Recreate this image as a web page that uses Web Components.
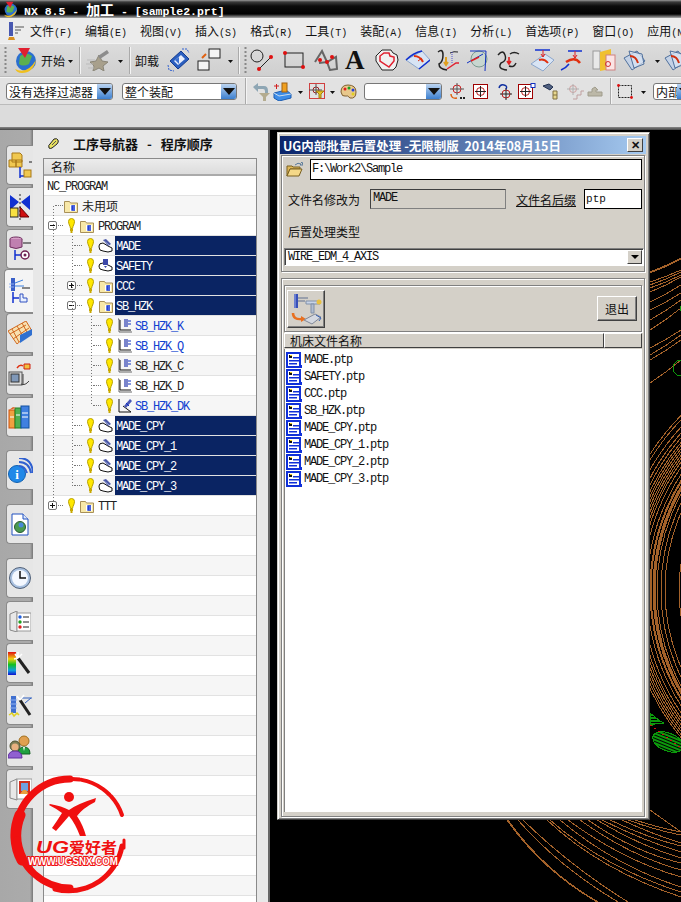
<!DOCTYPE html>
<html lang="zh">
<head>
<meta charset="utf-8">
<title>NX 8.5</title>
<style>
  html, body { margin: 0; padding: 0; background: #000; }
  body { width: 681px; height: 902px; overflow: hidden; }
</style>
</head>
<body>
<nx-app></nx-app>
<script>
/* ── Iconos: [ancho, alto, contenido] ─────────────────────── */
const K = '#1a1a1a';
const MONO = `12px "Liberation Mono",monospace`;
const ICONS = {
  nx: [25,27,`<circle cx="13" cy="14" r="10" fill="#2a6fd0"/><path d="M7 9q6-5 12 0l-3 8q-6 3-10 0z" fill="#5cb050"/><path d="M2 22q12 6 21-9-3 13-14 13-5 0-7-4z" fill="#f0c020"/><path d="M5 1h12l-5 10z" fill="#e02030"/>`],
  star: [26,22,`<path d="M14 6l3 6 6 1-5 4 1 5-5-3-6 3 1-5-4-4 6-1z" fill="#a8a08c" stroke="#8a8678"/><path d="M2 11h8M1 15h7M3 19h6" stroke="#bbb"/><path d="M13 7l9-6 2 3-9 6z" fill="#8c8c8c"/>`],
  unload: [24,24,`<path d="M3 13L14 3l8 8-11 10z" fill="#2b5fc0" stroke="#123a90"/><path d="M7 13l7-6 4 4-7 6z" fill="#e8eefc"/><path d="M8 12l4 4V9z" fill="#3b70d0"/><path d="M15 1l5 0 2 4M1 17l1 5 5 1" fill="none" stroke="#3060d0" stroke-dasharray="2 1"/>`],
  squares: [26,24,`<rect x="12" y="1" width="11" height="9" fill="#f4f4f4" stroke="#222"/><rect x="1" y="13" width="11" height="9" fill="#f4f4f4" stroke="#222"/><path d="M5 10l4-4" stroke="#e06010" stroke-width="2"/>`],
  cline: [25,22,`<circle cx="7" cy="7" r="6" fill="none" stroke="#222"/><path d="M10 19L21 8" stroke="#222"/><circle cx="9" cy="20" r="2" fill="#e01010"/><circle cx="21" cy="8" r="2" fill="#e01010"/>`],
  rect: [24,20,`<rect x="3" y="3" width="18" height="14" fill="none" stroke="#222"/><circle cx="3" cy="3" r="2" fill="#e01010"/><circle cx="21" cy="17" r="2" fill="#e01010"/>`],
  poly: [25,22,`<path d="M2 13L9 2l5 11 9-5 1 12-7 1-3-8-8 1" fill="none" stroke="#666" stroke-width="2"/><circle cx="7" cy="11" r="2" fill="#e01010"/><circle cx="14" cy="13" r="2" fill="#e01010"/><circle cx="19" cy="8" r="2" fill="#e01010"/>`],
  heart: [24,22,`<path d="M1 7l6-6h9l2 3 4 2 1 5-2 7-3 3H7L1 12z" fill="#f0f0f0" stroke="#222"/><path d="M5 7l4-3h5l1 3 4 1 0 4-5 6-9-6z" fill="none" stroke="#e02030" stroke-width="1.5"/>`],
  surf1: [25,20,`<path d="M1 10L17 1l8 9-11 9z" fill="#d8e4f4" stroke="#8ca6cc"/><path d="M1 10Q8 3 17 1" fill="none" stroke="#1030d0" stroke-width="1.5"/><path d="M14 19l11-9" stroke="#1030d0" stroke-width="1.5"/><path d="M9 6q6 0 9 6" fill="none" stroke="#e03010" stroke-width="2"/><path d="M13 11l4-3" stroke="#e03010"/>`],
  blend: [24,24,`<path d="M2 4q5-4 5 3t-4 9q0 5 8 6" fill="none" stroke="#222" stroke-width="1.5"/><path d="M14 5q4-2 8-1" fill="none" stroke="#222"/><path d="M16 4v12" stroke="#5050d0" stroke-dasharray="1 1"/><path d="M10 9v8m-2-3l2 3 2-3" stroke="#e0a020" stroke-width="2" fill="none"/><path d="M11 21l9-6 3 0" stroke="#e02030" stroke-width="1.5" fill="none"/>`],
  sphere: [24,24,`<circle cx="12" cy="11" r="8" fill="#c8d6d0" stroke="#7a9a90"/><path d="M3 3h16l-1 20M0 15L16 6" fill="none" stroke="#1030c0"/><path d="M4 13l8-4" stroke="#e02020" stroke-width="1.5"/>`],
  blend2: [23,22,`<path d="M1 6q5-6 7 0t-4 8q-4 6 6 7M12 17q5 2 7-3M13 5q4-3 9 0" fill="none" stroke="#222" stroke-width="1.4"/><path d="M12 8v7m-2-3l2 3 2-3" stroke="#e02020" stroke-width="1.6" fill="none"/>`],
  surf2: [25,24,`<path d="M1 16l14-10 9 6-11 11z" fill="#d8e4f4" stroke="#8ca6cc"/><path d="M5 2h15" stroke="#1030d0" stroke-width="1.5"/><path d="M13 2v7m-2-3l2 3 2-3" stroke="#e02020" fill="none"/><path d="M9 12q5-2 9 3" fill="none" stroke="#e03010" stroke-width="2"/>`],
  surf3: [25,24,`<path d="M8 3h14M1 22q5-2 8-6" fill="none" stroke="#1030d0" stroke-width="1.5"/><path d="M15 3v7m-2-3l2 3 2-3" stroke="#e02020" fill="none"/><path d="M6 14q9-6 14 1" fill="none" stroke="#e03010" stroke-width="2.5"/>`],
  doors: [24,24,`<rect x="1" y="3" width="7" height="18" fill="#e8e8e8" stroke="#999"/><path d="M8 4l11-3v20l-11 2z" fill="#f0c030"/><rect x="14" y="7" width="9" height="15" fill="#fbe4e4" stroke="#d08080"/><circle cx="16" cy="16" r="2.5" fill="none" stroke="#d03030"/>`],
  plane: [23,22,`<path d="M1 9l13-7 8 10-13 9z" fill="#c4d2e6" stroke="#50709c"/><path d="M6 2l13 3 2 10-10 4z" fill="#dce6f4" stroke="#50709c" fill-opacity=".7"/><path d="M7 7q6 0 8 7" fill="none" stroke="#d03010" stroke-width="2"/>`],
  flt1: [20,19,`<path d="M2 5l5-4v3h6q4 0 4 5v3h-3V9q0-2-2-2H7v3z" fill="#8ea6b4"/><path d="M8 11h11l-4 4v4h-3v-4z" fill="#b4ac90"/>`],
  cube: [19,19,`<path d="M1 11l12-3 5 4v4L6 19l-5-3z" fill="#3c8ce8" stroke="#1c5cb0"/><path d="M1 11l5 3 12-2" fill="none" stroke="#cde"/><rect x="9" y="1" width="5" height="9" fill="#f0a020" stroke="#a06010"/><path d="M1 4h5M3.500 2v5" stroke="#d02020"/>`],
  fltsq: [16,16,`<rect x=".5" y=".5" width="15" height="15" fill="none" stroke="#d04040"/><circle cx="7" cy="7" r="3" fill="none" stroke="#a02020"/><path d="M0 7h13M7 1v11" stroke="#555"/><path d="M7 8h8l-3 3v4h-2v-4z" fill="#e8c020" stroke="#a08010"/>`],
  palette: [17,15,`<path d="M8 1q8 0 8 7t-6 6q-2-3-5-2T1 8q0-7 7-7z" fill="#e8c88c" stroke="#806030"/><circle cx="5" cy="5" r="1.500" fill="#e02020"/><circle cx="9" cy="4" r="1.500" fill="#20a020"/><circle cx="13" cy="6" r="1.500" fill="#2040e0"/><circle cx="13" cy="10" r="1.500" fill="#e0d020"/>`],
  sn1: [18,18,`<circle cx="8" cy="7" r="4" fill="none" stroke="#d02020"/><path d="M1 7h14M8 1v12" stroke="#555"/><path d="M2 12q0 5 6 4" fill="none" stroke="#e06010" stroke-width="1.5"/><path d="M11 16h6" stroke="#222" stroke-width="2" stroke-dasharray="2 1"/>`],
  sn2: [15,15,`<rect x=".5" y=".5" width="14" height="14" fill="#fff" stroke="#a00000"/><circle cx="7.500" cy="7.500" r="4" fill="none" stroke="#c02020"/><path d="M2 7.500h11M7.500 2v11" stroke="#222"/>`],
  sn3: [16,17,`<circle cx="9" cy="11" r="4" fill="none" stroke="#c02020"/><path d="M3 11h12M9 5v12" stroke="#222"/><path d="M2 5q1-4 5-3t2 4" fill="none" stroke="#1030a0" stroke-width="1.4"/>`],
  sn4: [18,16,`<rect x=".5" y="1.500" width="14" height="14" fill="#fff" stroke="#a00000"/><circle cx="7.500" cy="8.500" r="4" fill="none" stroke="#c02020"/><path d="M2 8.500h11M7.500 3v11" stroke="#222"/><rect x="13" y=".5" width="4" height="4" fill="#fff" stroke="#1030c0"/>`],
  sn5: [16,17,`<path d="M1 3l6-2 4 3-3 3z" fill="#506080" stroke="#203050"/><path d="M11 8v8h4V8z" fill="#e8d890" stroke="#807040"/><path d="M11 12h4" stroke="#807040"/>`],
  sn6: [18,17,`<circle cx="6" cy="6" r="3.500" fill="none" stroke="#d0a0a0"/><path d="M0 6h12M6 1v11" stroke="#b0b0b0"/><path d="M6 16h4v-4h4V8h3" fill="none" stroke="#c0a0a0"/>`],
  sn7: [16,11,`<path d="M5 3l3-2 3 3h-2v2h6v4H1V6h4z" fill="#bcb8a8" stroke="#a09c8c"/>`],
  dashsq: [16,15,`<rect x="1.500" y="1.500" width="13" height="12" fill="none" stroke="#222" stroke-dasharray="2 1"/><circle cx="1.500" cy="1.500" r="1.400" fill="#e01010"/><circle cx="14.500" cy="13.500" r="1.400" fill="#e01010"/>`],
  gear: [11,11,`<path d="M1 10q-1-3 1-4l4-5q3-1 4 1t-1 4l-5 4q-2 1-3 0z" fill="#e8e060" stroke="#222"/><path d="M4 7l4-4" stroke="#555"/>`],
  bulb: [7,16,`<path d="M3.500.5q3 0 3 3 0 2-1.500 5l-.5 2h-2l-.5-2Q.5 5.500.5 3.500q0-3 3-3z" fill="#ffe800" stroke="#b8a000"/><rect x="2" y="11" width="3" height="2" fill="#c8a800"/><rect x="2.500" y="13" width="2" height="2" fill="#c8a800"/>`],
  folder: [14,14,`<path d="M.5 2.500h5l1 1.500h7v9.500H.5z" fill="#f8e8a8" stroke="#a89058"/><path d="M6 6h6v6H6z" fill="#fff"/><path d="M11 7H8v2h3M8 9v2h3" fill="none" stroke="#1030d0" stroke-width="1.300"/>`],
  op: [15,14,`<path d="M1 7q0-3 4-3l5 3 4 2v3l-4 1-5-1-3-1q-1-2-1-4z" fill="#fff" stroke="#111"/><path d="M5 1l3-1 5 5-3 2z" fill="#4a58a8"/><path d="M6 2l5 4" stroke="#a8b0d8"/>`],
  opv: [15,15,`<path d="M1 8q0-3 4-3l5 2 4 2v3l-4 1-5-1-3-1q-1-2-1-3z" fill="#fff" stroke="#111"/><rect x="5" y="1" width="5" height="6" fill="#3c48a8"/><path d="M6 8h3l-1.500 2z" fill="#3c48a8"/>`],
  mill: [15,15,`<path d="M1 1h1v13h13" fill="none" stroke="#666" stroke-width="1"/><path d="M3 2v10h11" fill="none" stroke="#111"/><rect x="7" y="1" width="4" height="8" fill="#4a58b8"/><path d="M8 1v8M10 1v8" stroke="#a8b0e0"/><path d="M11 3h3M11 6h3" stroke="#1030c0"/>`],
  drill: [15,15,`<path d="M2 1v13h12L6 8" fill="none" stroke="#111"/><path d="M7 8l6-7 2 2-6 7z" fill="#4a58b8"/><path d="M9 5l3 3" stroke="#1030c0"/>`],
  open: [17,15,`<path d="M1 4h5l1 1h7v2H4L1 14z" fill="#e0b858" stroke="#7a6020"/><path d="M4 7h12l-3 7H1z" fill="#f4d888" stroke="#7a6020"/><path d="M9 3q3-3 6-1l-1 1 3 0-1-3-1 1" fill="none" stroke="#5a7a9a"/>`],
  batch: [32,32,`<rect x="4" y="1" width="4" height="14" fill="#3850b8"/><path d="M5 1v14" stroke="#a0b0e8"/><path d="M8 5h10M8 8h7" stroke="#607090"/><path d="M3 20q0 7 9 6" fill="none" stroke="#e87020" stroke-width="2.500"/><path d="M11 23l5 3-5 3z" fill="#e87020"/><path d="M16 8h14v3H16z" fill="#c8d4e8" stroke="#8090a8"/><path d="M21 11v9h3v-9z" fill="#b0bcd0" stroke="#8090a8"/><circle cx="29" cy="9" r="2.500" fill="#e8c040"/><path d="M14 27l11-6 6 3-9 7z" fill="#d4d8e0" stroke="#808898"/><path d="M26 22l5 3-2 3" fill="none" stroke="#3860b0"/>`],
  file: [17,16,`<rect width="15" height="16" fill="#1030d8"/><rect x="2" y="2" width="11" height="12" fill="#fff"/><rect x="3" y="3" width="3" height="3" fill="#111"/><rect x="4" y="3" width="2" height="1" fill="#f0d020"/><rect x="7" y="5" width="7" height="1.500" fill="#1030d8"/><rect x="3" y="8" width="11" height="1.500" fill="#1030d8"/><rect x="3" y="11" width="8" height="1.500" fill="#1030d8"/><rect x="15" y="13" width="1" height="3" fill="#1030d8"/>`],
  /* iconos del carril izquierdo */
  r1: [24,26,`<path d="M4 1h8l2 2v7H4zM1 8h7v7H1zM8 8h6v7H8z" fill="#f0c850" stroke="#a87818"/><path d="M21 10h6" stroke="${K}"/><path d="M12 15v11M12 24h7" stroke="#1030d0" stroke-width="1.500"/><rect x="16" y="18" width="7" height="7" fill="#f0c850" stroke="#a87818"/>`],
  r2: [20,26,`<path d="M0 1l9 7-9 8zM20 1l-9 7 9 8z" fill="#1030d0"/><path d="M10 0v26" stroke="#222" stroke-dasharray="2 2"/><rect x="0" y="14" width="8" height="9" fill="#f8e040" stroke="#222"/><path d="M10 13l9 10H10z" fill="#d01010" stroke="#600"/>`],
  r3: [22,26,`<ellipse cx="7" cy="3" rx="6" ry="2" fill="#d8a0c8" stroke="#703060"/><path d="M1 3v8q6 3 12 0V3" fill="#c080b0" stroke="#703060"/><path d="M14 7h8" stroke="${K}"/><path d="M6 14v10M6 19h6" stroke="#1030d0" stroke-width="1.500"/><circle cx="16" cy="19" r="4" fill="#fff" stroke="#702050" stroke-width="1.500"/><circle cx="16" cy="19" r="1.500" fill="#702050"/>`],
  r4: [23,26,`<rect x="3" y="0" width="4" height="13" fill="#3a60c8"/><path d="M1 6h5M1 9h5" stroke="#8fb0f0"/><path d="M7 5l8-3M7 8h9" stroke="#3a80e0"/><path d="M14 10h8" stroke="${K}"/><path d="M5 14v11M5 20h6" stroke="#1030d0" stroke-width="1.500"/><path d="M12 16h3v4h4v4h-7z" fill="#e8f0ff" stroke="#3050c0"/>`],
  r5: [24,24,`<path d="M0 10L18 0l6 10-15 13z" fill="#f8e0b0" stroke="#d06820"/><path d="M4 8l7 13M9 5l7 12M14 2l6 11M2 13L18 4M5 18l16-11" stroke="#d06820"/><path d="M12 14l12-6v6l-12 8z" fill="#3070d0"/>`],
  r6: [24,24,`<rect x="1" y="9" width="13" height="13" fill="#dcdcdc" stroke="#555"/><rect x="3" y="11" width="8" height="8" fill="#8098b8" stroke="#333"/><path d="M9 5q3-4 6-2" fill="none" stroke="#e03010" stroke-width="1.500"/><path d="M16 1h6v5h-6z" fill="#f0c040" stroke="#d02010"/><path d="M15 11v11M13 21q4 2 8-3" stroke="#444" fill="none"/>`],
  r7: [24,24,`<rect x="1" y="5" width="6" height="18" fill="#f0a040" stroke="#d05010"/><rect x="7" y="3" width="6" height="20" fill="#50b050" stroke="#208020"/><rect x="13" y="1" width="8" height="22" fill="#4080e0" stroke="#1050a0"/><path d="M2 12h4M8 10h4M14 8h6M14 12h6" stroke="#fff"/><path d="M1 5l4-3 3 1" fill="#e06020"/>`],
  r8: [25,25,`<circle cx="9" cy="16" r="8.500" fill="#2088e8" stroke="#1060b0"/><text x="9" y="21" font-size="13" font-weight="700" font-family="Liberation Serif" text-anchor="middle" fill="#fff">i</text><path d="M11 4q10 0 12 11M11 0q13 0 14 15M11 8q6 0 8 7" fill="none" stroke="#3060d0" stroke-width="2"/>`],
  r9: [18,23,`<path d="M1 1h11l5 5v16H1z" fill="#fff" stroke="#2050c0"/><path d="M12 1v5h5" fill="#dfe8f8" stroke="#2050c0"/><circle cx="9" cy="14" r="5.500" fill="#4a9a50" stroke="#285a30"/><circle cx="10" cy="12" r="2.500" fill="#4888d8"/>`],
  r10: [22,22,`<circle cx="11" cy="11" r="10.500" fill="#a8c0e0" stroke="#506078"/><circle cx="11" cy="11" r="8" fill="#f4f8ff"/><path d="M11 4v7h6" fill="none" stroke="#111" stroke-width="1.500"/>`],
  r11: [22,21,`<path d="M1 3l7-3v21l-7-2z" fill="#e8e8e8" stroke="#888"/><rect x="8" y="2" width="14" height="18" fill="#fff" stroke="#999"/><circle cx="11" cy="6" r="1.700" fill="#2060e0"/><circle cx="11" cy="11" r="1.700" fill="#20a020"/><circle cx="11" cy="16" r="1.700" fill="#e02020"/><path d="M14 6h6M14 11h6M14 16h6" stroke="#222"/>`],
  r12: [24,25,`<defs><linearGradient id="rb" x1="0" y1="0" x2="0" y2="1"><stop offset="0" stop-color="#e01010"/><stop offset=".3" stop-color="#f0d010"/><stop offset=".55" stop-color="#10c020"/><stop offset=".8" stop-color="#10a0e0"/><stop offset="1" stop-color="#1010d0"/></linearGradient></defs><rect x="0" y="1" width="8" height="23" fill="url(#rb)"/><path d="M10 7l11 15" stroke="#222" stroke-width="3"/><path d="M10 7l-3-4m3 4l4-4m-4 4l-4 1m4-1v-6" stroke="#fff" stroke-width="1.500"/>`],
  r13: [24,25,`<rect x="3" y="3" width="5" height="17" fill="#4070d0"/><path d="M2 7h7M2 11h7M2 15h7" stroke="#90b0f0"/><path d="M1 22l3-2 2 3 3-3 2 2" stroke="#e0d020" stroke-width="1.500" fill="none"/><path d="M13 5h11M23 5l-6 5" stroke="#3060c0" fill="none"/><path d="M12 7l10 15" stroke="#222" stroke-width="3"/><path d="M12 7l-3-4m3 4l4-5" stroke="#fff" stroke-width="1.500"/>`],
  r14: [24,24,`<circle cx="16" cy="6" r="5" fill="#e0a050" stroke="#a07020"/><path d="M10 19q0-7 6-7t6 7z" fill="#20a040" stroke="#106020"/><path d="M15 12l1 4 1-4" fill="#fff"/><circle cx="7" cy="11" r="5" fill="#808058" stroke="#505030"/><circle cx="7" cy="12" r="3.500" fill="#e8b080"/><path d="M0 23q0-7 7-7t7 7z" fill="#9060d0" stroke="#6030a0"/>`],
  r15: [23,23,`<path d="M1 4l7-3v21l-7-2z" fill="#e8e8e8" stroke="#888"/><rect x="8" y="1" width="15" height="20" fill="#fff" stroke="#999"/><rect x="10" y="3" width="11" height="13" fill="#d03020"/><path d="M12 5h7v8h-7z" fill="#70a0e0"/><path d="M11 16l3-4h3l3 4z" fill="#e8a040"/>`],
  grip: [3,26,`<path d="M1.500 0v26" stroke="#888" stroke-width="2" stroke-dasharray="2 2"/>`],
  caret: [5,3,`<path d="M0 0h5L2.500 3z" fill="#111"/>`],
};

/* ── <nx-icon name="..."> ─────────────────────────────────── */
class NxIcon extends HTMLElement {
  connectedCallback() {
    const [w, h, body] = ICONS[this.getAttribute('name')];
    const root = this.attachShadow({ mode: 'open' });
    root.innerHTML = `<style>:host{display:block;flex:none;line-height:0}</style>
      <svg xmlns="http://www.w3.org/2000/svg" width="${w}" height="${h}" viewBox="0 0 ${w} ${h}">${body}</svg>`;
  }
}
customElements.define('nx-icon', NxIcon);

/* ── Barra de título ──────────────────────────────────────── */
class NxTitlebar extends HTMLElement {
  connectedCallback() {
    this.attachShadow({ mode: 'open' }).innerHTML = `
      <style>
        :host { display:flex; align-items:center; height:18px; padding-left:3px; box-sizing:border-box;
          background:linear-gradient(#9a9a9a 0,#3a3a3a 2px,#0c0c0c 6px,#000 14px,#555 16px,#aaa 18px);
          color:#fff; font:bold 11.5px "Liberation Mono","Noto Sans CJK SC",monospace; }
        span { margin-left:5px; white-space:pre; }
        b { font:bold 14px "Noto Sans CJK SC",sans-serif; }
      </style>
      <nx-icon name="nx" style="transform:scale(.62);margin:-5px -4px -5px -5px"></nx-icon>
      <span>NX 8.5 - <b>加工</b> - [sample2.prt]</span>`;
  }
}
customElements.define('nx-titlebar', NxTitlebar);

/* ── Menú ─────────────────────────────────────────────────── */
class NxMenubar extends HTMLElement {
  connectedCallback() {
    const items = [['文件','F'],['编辑','E'],['视图','V'],['插入','S'],['格式','R'],['工具','T'],
      ['装配','A'],['信息','I'],['分析','L'],['首选项','P'],['窗口','O'],['应用','N']];
    this.attachShadow({ mode: 'open' }).innerHTML = `
      <style>
        :host { display:flex; align-items:center; height:25px; box-sizing:border-box; padding-left:4px; gap:13px;
          overflow:hidden; background:#ececec; color:#111; font:12px "Noto Sans CJK SC",sans-serif; white-space:nowrap; }
        i { font:10px "Liberation Mono",monospace; }
        .m { flex:none; }
      </style>
      <svg width="16" height="18" viewBox="0 0 16 18" style="margin-left:4px;margin-right:-7px;flex:none">
        <path d="M2 0v14M4 0v14" stroke="#4858b0" stroke-width="2"/><path d="M1 15h5l1 3H0z" fill="#d89020"/>
        <path d="M7 5h9M7 8h6M7 11h3" stroke="#555"/></svg>
      ${items.map(([a, b]) => `<span class="m">${a}<i>(${b})</i></span>`).join('')}`;
  }
}
customElements.define('nx-menubar', NxMenubar);

/* ── Combo de la barra ────────────────────────────────────── */
class NxCombo extends HTMLElement {
  connectedCallback() {
    this.attachShadow({ mode: 'open' }).innerHTML = `
      <style>
        :host { display:flex; flex:none; height:17px; box-sizing:border-box; border:1px solid #777; border-radius:3px;
          background:#fff; overflow:hidden; font:12px/15px "Noto Sans CJK SC",sans-serif; color:#111; }
        span { flex:1; padding-left:2px; white-space:nowrap; overflow:hidden; }
        b { width:15px; flex:none; background:linear-gradient(#bcd4f0,#3c80d0); display:flex; align-items:center; justify-content:center; }
        b::after { content:""; border:6px solid transparent; border-top:7px solid #111; border-bottom:0; }
      </style><span><slot></slot></span><b></b>`;
  }
}
customElements.define('nx-combo', NxCombo);

/* ── Barra de herramientas: los hijos se separan con margen ─ */
class NxToolbar extends HTMLElement {
  connectedCallback() {
    const h = this.getAttribute('h');
    const bg = this.getAttribute('bg');
    this.attachShadow({ mode: 'open' }).innerHTML = `
      <style>
        :host { display:flex; align-items:center; height:${h}px; box-sizing:border-box; overflow:hidden;
          background:${bg}; border-top:1px solid #f4f4f4; border-bottom:1px solid #bbb; }
      </style><slot></slot>`;
  }
}
customElements.define('nx-toolbar', NxToolbar);

class NxSep extends HTMLElement {
  connectedCallback() {
    this.attachShadow({ mode: 'open' }).innerHTML = `
      <style>:host{display:block;flex:none;width:1px;height:27px;background:#aaa;border-right:1px solid #f4f4f4}</style>`;
  }
}
customElements.define('nx-sep', NxSep);

class NxLabel extends HTMLElement {
  connectedCallback() {
    this.attachShadow({ mode: 'open' }).innerHTML = `
      <style>:host{display:block;flex:none;font:12px "Noto Sans CJK SC",sans-serif;color:#111;white-space:nowrap}</style><slot></slot>`;
  }
}
customElements.define('nx-label', NxLabel);

/* ── Carril izquierdo ─────────────────────────────────────── */
class NavRail extends HTMLElement {
  connectedCallback() {
    const tabs = [[15,'r1'],[2,'r2'],[2,'r3'],[0,'r4',1],[0,'r5'],[2,'r6'],[2,'r7'],[13,'r8'],[14,'r9'],
      [14,'r10'],[3,'r11'],[2,'r12'],[2,'r13'],[2,'r14'],[2,'r15']];
    this.attachShadow({ mode: 'open' }).innerHTML = `
      <style>
        :host { display:flex; flex-direction:column; align-items:flex-end; width:33px; box-sizing:border-box;
          background:linear-gradient(90deg,#a8a8a8 0,#ababab 30px,#777 33px); overflow:hidden; }
        .t { width:27px; height:40px; box-sizing:border-box; flex:none; display:flex; align-items:center; justify-content:center;
          border:1px solid #8a8a8a; border-right:0; border-radius:4px 0 0 4px; background:#e6e6e6; overflow:hidden; }
        .on { width:29px; height:44px; background:#f4f4f4; }
      </style>
      ${tabs.map(([m, n, on]) => `<div class="t${on ? ' on' : ''}" style="margin-top:${m}px"><nx-icon name="${n}"></nx-icon></div>`).join('')}`;
  }
}
customElements.define('nav-rail', NavRail);

/* ── Fila del árbol ───────────────────────────────────────── */
class TreeRow extends HTMLElement {
  connectedCallback() {
    const level = +(this.getAttribute('level') || 0);
    const exp = this.getAttribute('exp');
    const icon = this.getAttribute('icon');
    const sel = this.hasAttribute('sel');
    const blue = this.hasAttribute('blue');
    const base = 4 + 19 * (level - 1);   // 44 es el borde izquierdo del árbol
    const cjk = this.hasAttribute('cjk');
    const label = this.getAttribute('label') || '';
    const nobulb = this.hasAttribute('nobulb');
    const iconGap = nobulb ? 1 : (icon === 'folder' ? 5 : 4);
    let inner = '';
    if (level === 0 && label) {
      inner = `<span class="l" style="padding-left:3px">${label}</span>`;
    } else if (level > 0) {
      const box = exp ? `<i class="x">${exp === '+' ? '<u></u>' : ''}</i>` : '';
      const start = exp ? base : base + 7;
      const dots = exp ? 5 : 8;
      inner = `<div style="width:${start}px;flex:none"></div>${box}
        <i class="d" style="width:${dots}px;margin-left:${exp ? 1 : 0}px"></i>
        ${nobulb ? '' : `<nx-icon name="bulb" style="margin-left:5px"></nx-icon>`}
        <nx-icon name="${icon}" style="margin-left:${iconGap}px"></nx-icon>
        <span class="l${sel ? ' s' : ''}${blue ? ' b' : ''}${cjk ? ' c' : ''}${level === 3 ? ' n' : ''}">${label}</span>`;
    }
    this.attachShadow({ mode: 'open' }).innerHTML = `
      <style>
        :host { display:flex; align-items:center; height:20px; box-sizing:border-box; border-bottom:1px solid #e2e2e2; background:#fff; }
        :host(:nth-child(even)) { background:#f6f6f6; }
        .l { font:${MONO}; line-height:22px; letter-spacing:-1.2px; color:#222; height:19px; padding:0 4px; white-space:nowrap; overflow:hidden; }
        .s { flex:1; background:#0a2463; color:#fff; margin-left:2px; padding-left:1px; }
        .n { padding-left:3px; }
        .b { color:#1040d0; }
        .c { font:12px/19px "Noto Sans CJK SC",sans-serif; letter-spacing:0; }
        .x { flex:none; position:relative; width:9px; height:9px; box-sizing:border-box; border:1px solid #777; border-radius:2px; background:#fff; }
        .x::before { content:""; position:absolute; left:1px; right:1px; top:3px; height:1px; background:#111; }
        .x u { position:absolute; top:1px; bottom:1px; left:3px; width:1px; background:#111; }
        .d { flex:none; height:0; border-top:1px dotted #777; }
      </style>${inner}`;
  }
}
customElements.define('tree-row', TreeRow);

/* ── Navegador de operaciones ─────────────────────────────── */
class OpNavigator extends HTMLElement {
  connectedCallback() {
    const blanks = Array.from({ length: 23 }, () => '<tree-row></tree-row>').join('');
    this.attachShadow({ mode: 'open' }).innerHTML = `
      <style>
        :host { display:flex; flex-direction:column; width:237px; box-sizing:border-box; background:#e8e8e8;
          padding:1px 11px 0 10px; border-right:2px solid #666; overflow:hidden; }
        .head { display:flex; align-items:center; justify-content:flex-start; height:25px; flex:none; padding-left:5px; margin-bottom:2px;
          font:bold 13px "Noto Sans CJK SC",sans-serif; color:#111; gap:14px; }
        .head span { word-spacing:6px; flex:none; }
        .tree { position:relative; flex:1; box-sizing:border-box; border:1px solid #8a8a8a; border-bottom:0; background:#fff; overflow:hidden; }
        .cap { height:17px; box-sizing:border-box; background:linear-gradient(#ececec,#dcdcdc); border-bottom:2px solid #aaa;
          font:12px/15px "Noto Sans CJK SC",sans-serif; color:#111; padding-left:7px; }
        svg.g { position:absolute; left:0; top:0; pointer-events:none; }
      </style>
      <div class="head"><nx-icon name="gear"></nx-icon><span>工序导航器 - 程序顺序</span></div>
      <div class="tree">
        <div class="cap">名称</div>
        <div>
          <tree-row level="0" label="NC_PROGRAM"></tree-row>
          <tree-row level="1" icon="folder" nobulb cjk label="未用项"></tree-row>
          <tree-row level="1" exp="-" icon="folder" label="PROGRAM"></tree-row>
          <tree-row level="2" icon="op" sel label="MADE"></tree-row>
          <tree-row level="2" icon="opv" sel label="SAFETY"></tree-row>
          <tree-row level="2" exp="+" icon="folder" sel label="CCC"></tree-row>
          <tree-row level="2" exp="-" icon="folder" sel label="SB_HZK"></tree-row>
          <tree-row level="3" icon="mill" blue label="SB_HZK_K"></tree-row>
          <tree-row level="3" icon="mill" blue label="SB_HZK_Q"></tree-row>
          <tree-row level="3" icon="mill" label="SB_HZK_C"></tree-row>
          <tree-row level="3" icon="mill" label="SB_HZK_D"></tree-row>
          <tree-row level="3" icon="drill" blue label="SB_HZK_DK"></tree-row>
          <tree-row level="2" icon="op" sel label="MADE_CPY"></tree-row>
          <tree-row level="2" icon="op" sel label="MADE_CPY_1"></tree-row>
          <tree-row level="2" icon="op" sel label="MADE_CPY_2"></tree-row>
          <tree-row level="2" icon="op" sel label="MADE_CPY_3"></tree-row>
          <tree-row level="1" exp="+" icon="folder" label="TTT"></tree-row>
          ${blanks}
        </div>
        <svg class="g" width="215" height="360" stroke="#777" stroke-dasharray="1 2">
          <path d="M9.500 47V343M28.500 77V327M47.500 157V247"/>
        </svg>
      </div>`;
  }
}
customElements.define('op-navigator', OpNavigator);

/* ── Área gráfica con las curvas ──────────────────────────── */
class CadCanvas extends HTMLElement {
  connectedCallback() {
    const C = '#a4622a';
    const cx = 860, cy = 590;
    let p = '';
    // curvas concéntricas
    [178,181,195,199,203,205,206,207,209,210,213,217,220,222,224,226,228,230,232].forEach(r => {
      p += `<circle cx="${cx}" cy="${cy}" r="${r}"/>`;
    });
    [235,238,242,247,250].forEach(r => {
      p += `<path d="M${cx - r} ${cy}A${r} ${r} 0 0 1 ${cx} ${cy - r}"/>`;
    });
    // arriba a la derecha
    [[272,258],[273,259],[282,270],[285,272],[288,275],[292,277],[302,285],[310,293],[320,300],[330,308],[348,330],[355,335],[360,340],[383,360]]
      .forEach(([a, b]) => { p += `<path d="M650 ${a}Q666 ${(a + b) / 2 + 1} 681 ${b}"/>`; });
    // abajo
    const low = [[507,820,542,870,597,902],[508,820,543,870,598,902],[518,820,558,866,618,902],[523,820,570,866,628,902],
      [547,820,600,870,681,897],[550,820,605,868,681,892],[560,820,615,866,681,887],[568,820,622,860,681,877],
      [580,820,630,856,681,870],[588,820,634,852,681,863],[597,820,640,846,681,858],[602,820,642,840,681,852],
      [610,820,648,838,681,846],[622,820,652,834,681,843],[628,820,655,830,681,835],[635,820,660,828,681,832]];
    low.forEach(([a, b, c, d, e, f]) => { p += `<path d="M${a} ${b}Q${c} ${d} ${e} ${f}"/>`; });
    p += `<path d="M650 810L681 832"/>`;
    this.attachShadow({ mode: 'open' }).innerHTML = `
      <style>:host{display:block;flex:1;background:#000;overflow:hidden;min-width:0}svg{display:block}</style>
      <svg xmlns="http://www.w3.org/2000/svg" width="411" height="772" viewBox="270 130 411 772" shape-rendering="crispEdges">
        <defs>
          <pattern id="h" width="4" height="3" patternUnits="userSpaceOnUse"><rect width="4" height="2" fill="#0c9a0c"/></pattern>
        </defs>
        <g fill="none" stroke="${C}">${p}</g>
        <g fill="url(#h)" stroke="#0c9a0c">
          <path d="M650 713l10 8 4 2-9 1-5 2z"/>
          <ellipse cx="668" cy="742" rx="16" ry="9" transform="rotate(22 668 742)"/>
        </g>
        <path d="M650 725L681 748" stroke="#d01010" stroke-dasharray="2 3"/>
        <circle cx="681" cy="368" r="8" fill="none" stroke="#0c9a0c"/>
        <rect x="680" y="306" width="1" height="5" fill="#0c9a0c"/>
      </svg>`;
  }
}
customElements.define('cad-canvas', CadCanvas);

/* ── Diálogo flotante ─────────────────────────────────────── */
class BatchDialog extends HTMLElement {
  connectedCallback() {
    const files = ['MADE','SAFETY','CCC','SB_HZK','MADE_CPY','MADE_CPY_1','MADE_CPY_2','MADE_CPY_3'];
    this.attachShadow({ mode: 'open' }).innerHTML = `
      <style>
        :host { position:absolute; left:277px; top:132px; width:373px; height:688px; box-sizing:border-box;
          display:flex; flex-direction:column; padding:3px 3px 2px 2px; background:#d4d0c8; color:#111;
          border:1px solid; border-color:#d4d0c8 #404040 #404040 #d4d0c8;
          box-shadow:inset 1px 1px #fff, inset -1px -1px #808080;
          font:12px "Noto Sans CJK SC",sans-serif; }
        .mono { font:${MONO}; letter-spacing:-1.2px; }
        .title { height:18px; flex:none; display:flex; align-items:center; justify-content:space-between; box-sizing:border-box; padding:0 3px;
          background:linear-gradient(90deg,#0a246a,#a6caf0); color:#fff; font:bold 12.5px "Noto Sans CJK SC",sans-serif; white-space:pre; }
        .close { width:16px; height:14px; box-sizing:border-box; background:#d4d0c8; color:#111; border:1px solid; border-color:#fff #404040 #404040 #fff;
          font:bold 11px/12px "Liberation Sans",sans-serif; text-align:center; }
        .group { margin:1px 1px 0; border:1px solid #808080; box-shadow:inset 1px 1px #fff, 1px 1px #fff; box-sizing:border-box; }
        .g1 { height:117px; padding:3px 2px 0; flex:none; }
        .g2 { flex:1; margin-top:6px; padding:6px 1px 4px; display:flex; flex-direction:column; min-height:0; }
        .row { display:flex; align-items:center; }
        .edit { background:#fff; border:1px solid #000; box-sizing:border-box; padding:1px 1px; line-height:16px; }
        .lab { margin-left:4px; flex:none; }
        .ro { width:136px; height:20px; margin-left:10px; box-sizing:border-box; border:1px solid; border-color:#404040 #808080 #808080 #404040; padding:1px 2px; }
        .combo { margin:8px -2px 0 0; height:18px; box-sizing:border-box; border:1px solid; border-color:#808080 #fff #fff #808080; box-shadow:inset 1px 1px #404040; background:#fff;
          display:flex; align-items:center; padding-left:3px; justify-content:space-between; line-height:17px; }
        .combo span { padding-top:1px; }
        .arrow { width:15px; height:14px; margin-right:1px; box-sizing:border-box; background:#d4d0c8; border:1px solid; border-color:#fff #404040 #404040 #fff; display:flex; align-items:center; justify-content:center; }
        .arrow::after { content:""; border:4px solid transparent; border-top:4px solid #000; border-bottom:0; }
        .tools { height:47px; flex:none; margin:0 1px; box-sizing:border-box; border:1px solid #808080; box-shadow:inset 1px 1px #fff, 1px 1px #fff; display:flex; align-items:center; justify-content:space-between; padding:0 4px 0 2px; }
        .btn { box-sizing:border-box; background:#d4d0c8; border:1px solid; border-color:#fff #404040 #404040 #fff; box-shadow:inset -1px -1px #808080; display:flex; align-items:center; justify-content:center; }
        .hdr { display:flex; height:15px; flex:none; margin:1px 1px 0 1px; }
        .hdr div { box-sizing:border-box; border:1px solid; border-color:#fff #404040 #404040 #fff; line-height:14px; padding-left:5px; overflow:hidden; }
        .list { flex:1; margin:1px 1px 0; background:#fff; min-height:0; padding:2px 1px; border-left:1px solid #808080; box-sizing:border-box; }
        .file { display:flex; align-items:center; height:17px; gap:1px; }
      </style>
      <div class="title"><span>UG内部批量后置处理 -无限制版  2014年08月15日</span><div class="close">✕</div></div>
      <div class="group g1">
        <div class="row" style="height:21px;padding-left:2px;gap:7px">
          <nx-icon name="open"></nx-icon>
          <div class="edit mono" style="flex:1;height:21px">F:\\Work2\\Sample</div>
        </div>
        <div class="row" style="height:20px;margin-top:9px">
          <span class="lab">文件名修改为</span>
          <div class="ro mono">MADE</div>
          <span style="margin-left:10px;text-decoration:underline;flex:none">文件名后缀</span>
          <div class="edit" style="flex:1;height:20px;margin-left:8px;font:11px/16px 'Liberation Mono',monospace">ptp</div>
        </div>
        <div class="row" style="height:18px;margin-top:13px"><span class="lab">后置处理类型</span></div>
        <div class="combo mono"><span>WIRE_EDM_4_AXIS</span><div class="arrow"></div></div>
      </div>
      <div class="group g2">
        <div class="tools">
          <div class="btn" style="width:38px;height:38px"><nx-icon name="batch"></nx-icon></div>
          <div class="btn" style="width:40px;height:25px">退出</div>
        </div>
        <div class="hdr"><div style="width:320px;flex:none">机床文件名称</div><div style="flex:1"></div></div>
        <div class="list mono">
          ${files.map(f => `<div class="file"><nx-icon name="file"></nx-icon><span>${f}.ptp</span></div>`).join('')}
        </div>
      </div>`;
  }
}
customElements.define('batch-dialog', BatchDialog);

/* ── Marca de agua ────────────────────────────────────────── */
class UgWatermark extends HTMLElement {
  connectedCallback() {
    this.attachShadow({ mode: 'open' }).innerHTML = `
      <style>:host{position:absolute;left:10px;top:772px;width:120px;height:124px;pointer-events:none}svg{display:block}</style>
      <svg xmlns="http://www.w3.org/2000/svg" width="120" height="124" viewBox="10 772 120 124">
        <g fill="none" stroke="#f01010" stroke-linecap="round">
          <path d="M122 815A53 53 0 0 0 70 779" stroke-width="4" stroke-dasharray="22 2 9 1"/>
          <path d="M70 779A54 54 0 0 0 16 833" stroke-width="7"/>
          <path d="M20 815A53 53 0 0 0 22 860" stroke-width="11"/>
          <path d="M17 840A54 54 0 0 0 70 888" stroke-width="7"/>
          <path d="M55 889A54 54 0 0 0 122 846" stroke-width="5" stroke-dasharray="30 2 14 1 20 2"/>
          <path d="M124 840v8M121 852l-3 6" stroke-width="3"/>
        </g>
        <circle cx="69" cy="797" r="5" fill="#f01010"/>
        <path d="M50 804q12 2 19 6 8-6 27-12l-1 4q-12 6-18 14 6 9 9 20h-6q-5-13-11-20-6 7-13 15l-4-3q5-7 10-15-5-4-13-8z" fill="#f01010"/>
        <text x="36" y="853" font-family="Liberation Sans" font-size="17" font-weight="700" font-style="italic" fill="#f01010" textLength="33" lengthAdjust="spacingAndGlyphs">UG</text>
        <text x="69" y="853" font-family="Noto Sans CJK SC" font-size="15" font-weight="700" fill="#f01010" textLength="48" lengthAdjust="spacingAndGlyphs">爱好者</text>
        <text x="28" y="865" font-family="Liberation Sans" font-size="10" font-weight="700" fill="#fff" stroke="#f01010" stroke-width="2" paint-order="stroke" textLength="90" lengthAdjust="spacingAndGlyphs">WWW.UGSNX.COM</text>
      </svg>`;
  }
}
customElements.define('ug-watermark', UgWatermark);

/* ── Aplicación ───────────────────────────────────────────── */
class NxApp extends HTMLElement {
  connectedCallback() {
    const ic = (n, m) => `<nx-icon name="${n}" style="margin-left:${m}px"></nx-icon>`;
    const car = m => ic('caret', m);
    const lab = (t, m) => `<nx-label style="margin-left:${m}px">${t}</nx-label>`;
    const sep = m => `<nx-sep style="margin-left:${m}px"></nx-sep>`;
    this.attachShadow({ mode: 'open' }).innerHTML = `
      <style>
        :host { position:relative; display:flex; flex-direction:column; width:681px; height:902px; overflow:hidden; }
        .blank { height:22px; flex:none; background:#dcdcdc; }
        .line { height:3px; flex:none; background:linear-gradient(#888,#444); }
        .main { flex:1; display:flex; min-height:0; }
      </style>
      <nx-titlebar></nx-titlebar>
      <nx-menubar></nx-menubar>
      <nx-toolbar h="34" bg="linear-gradient(#dcdcdc,#cfcfcf)"><!--
        -->${ic('grip',4)}${ic('nx',6)}${lab('开始',3)}${car(3)}${sep(6)}${ic('star',4)}${car(7)}${sep(6)}<!--
        -->${lab('卸载',4)}${ic('unload',8)}${ic('squares',6)}${car(5)}${sep(5)}${ic('grip',4)}${ic('cline',3)}<!--
        -->${ic('rect',7)}${ic('poly',7)}<!--
        --><nx-label style="margin-left:7px;width:20px;font:bold 27px/30px 'Liberation Serif',serif">A</nx-label><!--
        -->${ic('heart',10)}${ic('surf1',6)}${ic('blend',6)}${ic('sphere',7)}${ic('blend2',6)}${ic('surf2',10)}${ic('surf3',5)}<!--
        -->${ic('doors',7)}${ic('plane',7)}${car(9)}${ic('plane',4)}
      </nx-toolbar>
      <nx-toolbar h="28" bg="#e2e2e2"><!--
        --><nx-combo style="margin-left:6px;width:107px">没有选择过滤器</nx-combo><!--
        --><nx-combo style="margin-left:9px;width:115px">整个装配</nx-combo><!--
        -->${sep(8)}${ic('flt1',4)}${ic('cube',2)}${car(6)}${ic('fltsq',6)}${car(5)}${ic('palette',5)}<!--
        --><nx-combo style="margin-left:7px;width:78px"></nx-combo><!--
        -->${ic('sn1',7)}${ic('sn2',6)}${ic('sn3',9)}${ic('sn4',5)}${ic('sn5',6)}${ic('sn6',9)}${ic('sn7',2)}<!--
        -->${sep(7)}${ic('dashsq',5)}${car(8)}<!--
        --><nx-combo style="margin-left:7px;width:40px">内部</nx-combo>
      </nx-toolbar>
      <div class="blank"></div>
      <div class="line"></div>
      <div class="main">
        <nav-rail></nav-rail>
        <op-navigator></op-navigator>
        <cad-canvas></cad-canvas>
      </div>
      <batch-dialog></batch-dialog>
      <ug-watermark></ug-watermark>`;
  }
}
customElements.define('nx-app', NxApp);
</script>
</body>
</html>
